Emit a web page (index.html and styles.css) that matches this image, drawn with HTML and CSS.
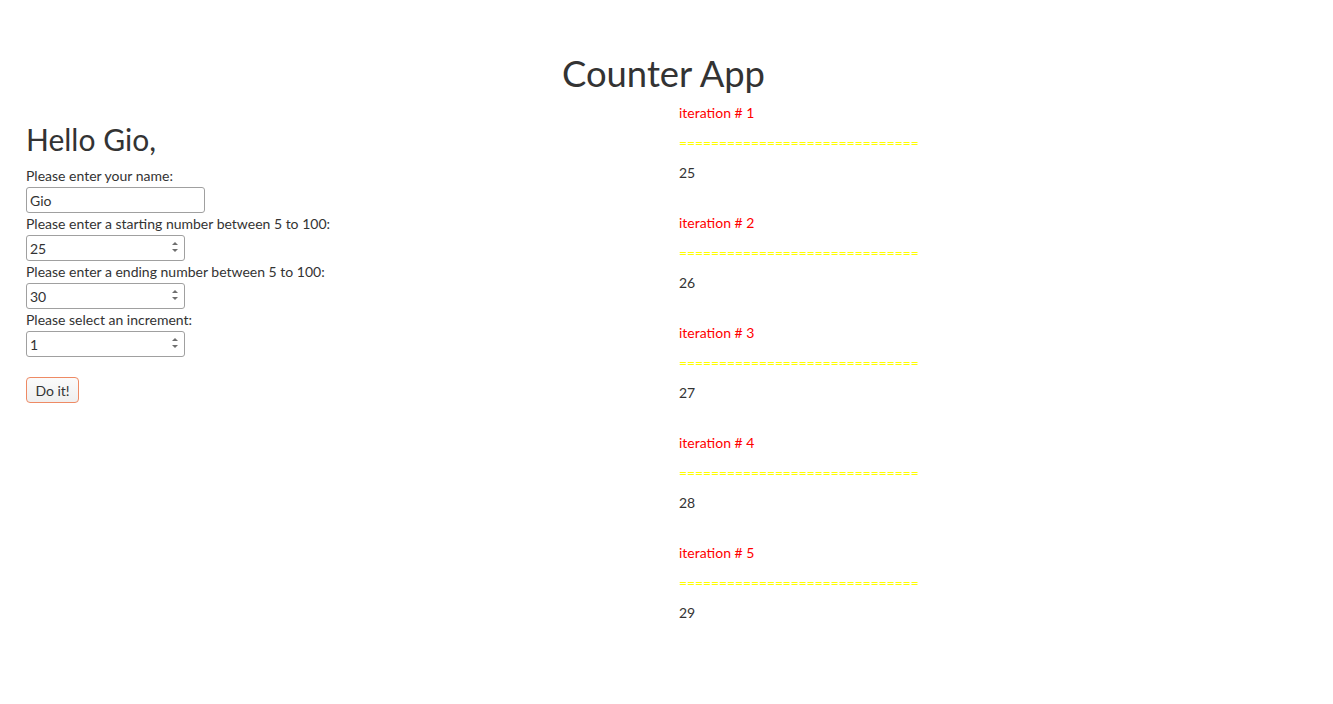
FILE: index.html
```html
<!DOCTYPE html>
<html>
<head>
<meta charset="utf-8">
<link rel="stylesheet" href="styles.css">
</head>
<body>
<h1 class="title">Counter App</h1>
<div class="row">
  <div class="col-left">
    <h2 class="greeting">Hello Gio,</h2>
    <label class="lbl">Please enter your name:</label>
    <input class="field field-text" type="text" value="Gio">
    <label class="lbl">Please enter a starting number between 5 to 100:</label>
    <span class="num-wrap"><input class="field field-num" type="number" value="25"></span>
    <label class="lbl">Please enter a ending number between 5 to 100:</label>
    <span class="num-wrap"><input class="field field-num" type="number" value="30"></span>
    <label class="lbl">Please select an increment:</label>
    <span class="num-wrap"><input class="field field-num" type="number" value="1"></span>
    <button class="btn">Do it!</button>
  </div>
  <div class="col-right">
    <div class="iter"><p class="iter-title">iteration # 1</p><p class="iter-sep">==============================</p><p class="iter-val">25</p></div>
    <div class="iter"><p class="iter-title">iteration # 2</p><p class="iter-sep">==============================</p><p class="iter-val">26</p></div>
    <div class="iter"><p class="iter-title">iteration # 3</p><p class="iter-sep">==============================</p><p class="iter-val">27</p></div>
    <div class="iter"><p class="iter-title">iteration # 4</p><p class="iter-sep">==============================</p><p class="iter-val">28</p></div>
    <div class="iter"><p class="iter-title">iteration # 5</p><p class="iter-sep">==============================</p><p class="iter-val">29</p></div>
  </div>
</div>
</body>
</html>
```
FILE: styles.css
```css
html, body {
  margin: 0;
  padding: 0;
  background: #fff;
}
body {
  font-family: Lato, "Open Sans", sans-serif;
  font-size: 14px;
  line-height: 20px;
  color: #333;
}
.title {
  font-size: 36.4px;
  font-weight: 400;
  line-height: 40px;
  text-align: center;
  margin: 53px 0 10px;
  padding-right: 6px;
}
.row {
  display: grid;
  grid-template-columns: 679px 1fr;
}
.col-left {
  padding-left: 26px;
  display: flex;
  flex-direction: column;
  align-items: flex-start;
}
.greeting {
  font-size: 30px;
  font-weight: 400;
  line-height: 33px;
  margin: 20px 0 10px;
}
.lbl {
  display: block;
  line-height: 20px;
}
.field {
  box-sizing: border-box;
  height: 26px;
  margin: 1px 0 1px;
  border: 1px solid #a0a0a0;
  border-radius: 3px;
  font-family: Lato, sans-serif;
  font-size: 14px;
  color: #333;
  padding: 0 3px;
  background: #fff;
  display: block;
}
.field-text { width: 179px; }
.field-num {
  width: 159px;
  -moz-appearance: textfield;
}
.field-num::-webkit-inner-spin-button,
.field-num::-webkit-outer-spin-button {
  -webkit-appearance: none;
  margin: 0;
}
.num-wrap {
  position: relative;
  display: block;
}
.num-wrap::before,
.num-wrap::after {
  content: "";
  position: absolute;
  left: 146px;
  width: 0;
  height: 0;
  border-left: 3px solid transparent;
  border-right: 3px solid transparent;
}
.num-wrap::before {
  top: 8px;
  border-bottom: 3px solid #6f6f6f;
}
.num-wrap::after {
  top: 15px;
  border-top: 3px solid #6f6f6f;
}
.btn {
  margin-top: 19px;
  box-sizing: border-box;
  height: 26px;
  width: 53px;
  padding: 0 6px;
  border: 1px solid #ee8a64;
  border-radius: 4px;
  background: linear-gradient(#fbfbfb, #efefef);
  font-family: Lato, sans-serif;
  font-size: 14px;
  color: #333;
}
.iter {
  padding-bottom: 20px;
}
.iter p {
  margin: 0 0 10px;
  line-height: 20px;
}
.iter-title { color: #f00; }
.iter-sep {
  color: #ff0;
  letter-spacing: -0.13px;
}
.iter-val { color: #333; }
```
